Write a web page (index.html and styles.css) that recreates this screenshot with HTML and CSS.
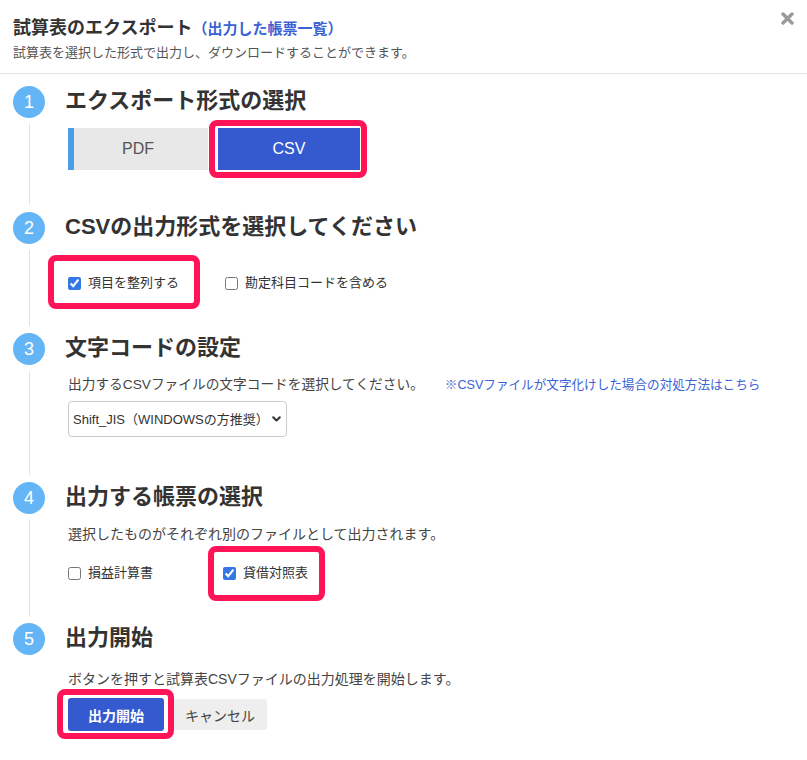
FILE: index.html
```html
<!DOCTYPE html>
<html lang="ja">
<head>
<meta charset="utf-8">
<title>試算表のエクスポート</title>
<link rel="stylesheet" href="styles.css">
</head>
<body>
<div class="dialog">
  <header class="head">
    <h1 class="title">試算表のエクスポート<a class="title-link" href="#">（出力した帳票一覧）</a></h1>
    <p class="sub">試算表を選択した形式で出力し、ダウンロードすることができます。</p>
    <button class="close" type="button" aria-label="閉じる">
      <svg width="13" height="13" viewBox="0 0 13 13"><path d="M2 2 L11 11 M11 2 L2 11" stroke="#9a9a9a" stroke-width="3.4" stroke-linecap="round" fill="none"/></svg>
    </button>
  </header>

  <ol class="steps">
    <li class="step">
      <div class="rail"><span class="num">1</span><span class="line"></span></div>
      <div class="body b1">
        <h2 class="step-title">エクスポート形式の選択</h2>
        <div class="formats">
          <button class="fmt fmt-pdf" type="button">PDF</button>
          <span class="hl hl-csv"><button class="fmt fmt-csv" type="button">CSV</button></span>
        </div>
      </div>
    </li>

    <li class="step">
      <div class="rail"><span class="num">2</span><span class="line"></span></div>
      <div class="body b2">
        <h2 class="step-title">CSVの出力形式を選択してください</h2>
        <div class="opts opts-2">
          <label class="opt opt-a hl hl-sort"><input type="checkbox" checked>項目を整列する</label>
          <label class="opt"><input type="checkbox">勘定科目コードを含める</label>
        </div>
      </div>
    </li>

    <li class="step">
      <div class="rail"><span class="num">3</span><span class="line"></span></div>
      <div class="body b3">
        <h2 class="step-title">文字コードの設定</h2>
        <p class="desc desc-3"><span>出力するCSVファイルの文字コードを選択してください。</span><a class="link" href="#">※CSVファイルが文字化けした場合の対処方法はこちら</a></p>
        <div class="select-wrap">
          <select class="select">
            <option>Shift_JIS（WINDOWSの方推奨）</option>
            <option>UTF-8</option>
          </select>
          <svg class="chev" width="9" height="6" viewBox="0 0 9 6"><path d="M1.2 1.2 L4.5 4.5 L7.8 1.2" stroke="#333" stroke-width="2" fill="none" stroke-linecap="round" stroke-linejoin="round"/></svg>
        </div>
      </div>
    </li>

    <li class="step">
      <div class="rail"><span class="num">4</span><span class="line"></span></div>
      <div class="body b4">
        <h2 class="step-title">出力する帳票の選択</h2>
        <p class="desc">選択したものがそれぞれ別のファイルとして出力されます。</p>
        <div class="opts opts-4">
          <label class="opt opt-c"><input type="checkbox">損益計算書</label>
          <label class="opt hl hl-bs"><input type="checkbox" checked>貸借対照表</label>
        </div>
      </div>
    </li>

    <li class="step">
      <div class="rail"><span class="num">5</span></div>
      <div class="body b5">
        <h2 class="step-title">出力開始</h2>
        <p class="desc desc-5">ボタンを押すと試算表CSVファイルの出力処理を開始します。</p>
        <div class="actions">
          <span class="hl hl-start"><button class="btn btn-start" type="button">出力開始</button></span>
          <button class="btn btn-cancel" type="button">キャンセル</button>
        </div>
      </div>
    </li>
  </ol>
</div>
</body>
</html>
```

FILE: styles.css
```css
* { box-sizing: border-box; }

body {
  margin: 0;
  background: #fff;
  color: #333;
  font-family: "Liberation Sans", "Noto Sans CJK JP", sans-serif;
}

.dialog {
  position: relative;
  width: 807px;
  min-height: 760px;
}

/* header */
.head {
  padding: 16px 13px 11px;
  border-bottom: 1px solid #e4e4e4;
}
.title {
  margin: 0;
  font-size: 18px;
  line-height: 24px;
  font-weight: bold;
  color: #333;
}
.title-link {
  font-size: 15px;
  color: #3a63d4;
  text-decoration: none;
}
.sub {
  margin: 3px 0 0;
  font-size: 13px;
  line-height: 18px;
  color: #555;
}
.close {
  position: absolute;
  top: 12px;
  right: 13px;
  width: 13px;
  height: 13px;
  padding: 0;
  border: 0;
  background: none;
  line-height: 0;
}

/* steps */
.steps {
  list-style: none;
  margin: 0;
  padding: 11px 0 0;
}
.step {
  display: grid;
  grid-template-columns: 65px 1fr;
}
.rail {
  display: flex;
  flex-direction: column;
  padding-left: 13px;
}
.num {
  width: 32px;
  height: 32px;
  margin-top: 1px;
  border-radius: 50%;
  background: #64b5f6;
  color: #fff;
  font-family: "Liberation Sans", sans-serif;
  font-size: 18px;
  line-height: 32px;
  text-align: center;
}
.line {
  flex: 1;
  width: 1px;
  margin: 6px 0 6px 16px;
  background: #e2e2e2;
}
.step-title {
  margin: 0;
  font-size: 22px;
  line-height: 32px;
  font-weight: bold;
  color: #333;
}
.b1 { padding-bottom: 41px; }
.b2 { padding-bottom: 39px; }
.b3 { padding-bottom: 44px; }
.b4 { padding-bottom: 39px; }
.b5 { padding-bottom: 28px; }

/* highlight annotation */
.hl { position: relative; }
.hl::after {
  content: "";
  position: absolute;
  border: 6px solid #ff1457;
  border-radius: 8px;
  pointer-events: none;
}
.hl-csv::after { inset: -8px -7px -8px -9px; }
.hl-sort::after { inset: -18px 25px -16px -20px; }
.hl-bs::after { inset: -17px -17px -18px -15px; }
.hl-start::after { inset: -9px -10px -8px -11px; }

/* step 1 */
.formats {
  display: flex;
  gap: 10px;
  margin-top: 11px;
  padding-left: 3px;
}
.fmt {
  display: block;
  height: 42px;
  padding: 0;
  border: 0;
  font-family: inherit;
  font-size: 16px;
}
.fmt-pdf {
  width: 140px;
  background: #e8e8e8;
  color: #555;
  box-shadow: inset 6px 0 0 #4b9de8;
}
.fmt-csv {
  width: 142px;
  background: #3559cf;
  color: #fff;
}

/* options */
.opts {
  display: flex;
  padding-left: 3px;
  font-size: 13px;
  line-height: 20px;
  color: #333;
}
.opts-2 { margin-top: 30px; }
.opts-4 { margin-top: 19px; }
.opt {
  display: flex;
  align-items: center;
  white-space: nowrap;
}
.opt input {
  width: 13px;
  height: 13px;
  margin: 0 7px 0 0;
  accent-color: #3578e5;
}
.opt-a { width: 157px; }
.opt-c { width: 155px; }

/* descriptions */
.desc {
  margin: 11px 0 0;
  padding-left: 3px;
  font-size: 14px;
  line-height: 20px;
  color: #444;
}
.desc-3 {
  display: flex;
  gap: 21px;
  font-size: 13.7px;
}
.desc-5 { margin-top: 15px; }
.link {
  font-size: 12.6px;
  color: #3b63d6;
  text-decoration: none;
}

/* select */
.select-wrap {
  position: relative;
  width: 219px;
  height: 36px;
  margin: 6px 0 0 3px;
}
.select {
  width: 100%;
  height: 100%;
  appearance: none;
  -webkit-appearance: none;
  border: 1px solid #ccc;
  border-radius: 4px;
  padding: 0 0 0 4px;
  background: #fff;
  color: #333;
  font-family: inherit;
  font-size: 13px;
}
.chev {
  position: absolute;
  right: 6px;
  top: 15px;
  pointer-events: none;
}

/* actions */
.actions {
  display: flex;
  align-items: center;
  gap: 9px;
  margin-top: 9px;
  padding-left: 3px;
}
.btn {
  display: block;
  padding: 0;
  border: 0;
  border-radius: 3px;
  font-family: inherit;
}
.btn-start {
  width: 96px;
  height: 33px;
  background: #3559cf;
  color: #fff;
  font-size: 14px;
  font-weight: bold;
}
.btn-cancel {
  width: 94px;
  height: 31px;
  background: #eeeeee;
  color: #444;
  font-size: 14px;
}
```
